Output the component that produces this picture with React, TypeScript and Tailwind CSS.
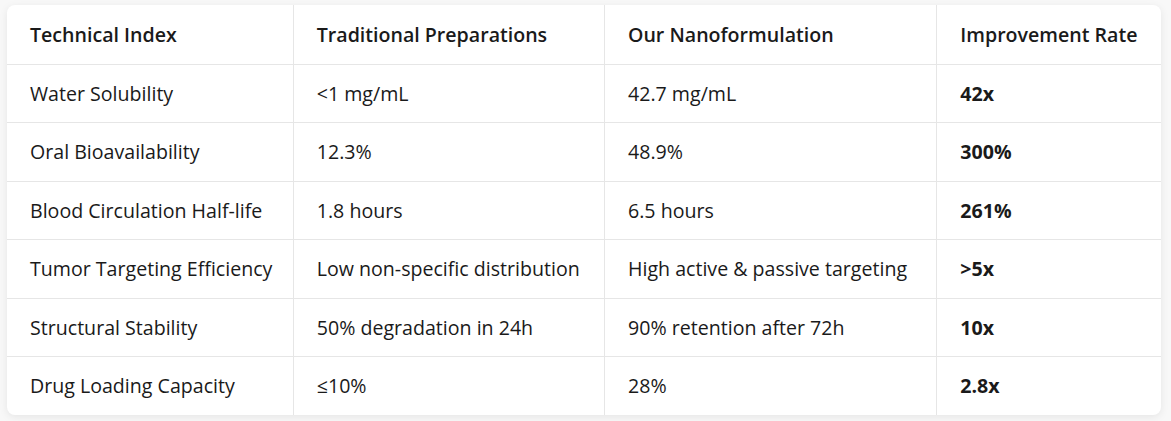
import React from "react";

const rows: [string, string, string, string][] = [
  ["Water Solubility", "<1 mg/mL", "42.7 mg/mL", "42x"],
  ["Oral Bioavailability", "12.3%", "48.9%", "300%"],
  ["Blood Circulation Half-life", "1.8 hours", "6.5 hours", "261%"],
  ["Tumor Targeting Efficiency", "Low non-specific distribution", "High active & passive targeting", ">5x"],
  ["Structural Stability", "50% degradation in 24h", "90% retention after 72h", "10x"],
  ["Drug Loading Capacity", "≤10%", "28%", "2.8x"],
];

const headers = ["Technical Index", "Traditional Preparations", "Our Nanoformulation", "Improvement Rate"];
const widths = ["w-[286px]", "w-[311px]", "w-[332px]", "w-[224px]"];

const App: React.FC = () => {
  return (
    <div className="w-[1171px] h-[421px] bg-[#f8f8f8] pt-[5px] pl-[7px] font-['Open_Sans','Noto_Sans',sans-serif] text-[#1a1a1a]">
      <div className="w-[1154px] bg-white rounded-lg shadow-[0_2px_8px_rgba(0,0,0,0.08)] overflow-hidden">
        <table className="w-full border-collapse table-fixed text-[19.6px]">
          <colgroup>
            {widths.map((w, i) => (
              <col key={i} className={w} />
            ))}
          </colgroup>
          <thead>
            <tr className="h-[59px]">
              {headers.map((h, i) => (
                <th
                  key={h}
                  className={`text-left font-semibold pl-[23px] pr-0 whitespace-nowrap border-b border-[#e6e6e6] ${i > 0 ? "border-l" : ""}`}
                >
                  {h}
                </th>
              ))}
            </tr>
          </thead>
          <tbody>
            {rows.map((r, ri) => (
              <tr key={ri} className="h-[58.5px]">
                {r.map((c, ci) => (
                  <td
                    key={ci}
                    className={`pl-[23px] pr-0 whitespace-nowrap border-[#e6e6e6] ${ri < rows.length - 1 ? "border-b" : ""} ${ci > 0 ? "border-l" : ""} ${ci === 3 ? "font-bold" : ""}`}
                  >
                    {c}
                  </td>
                ))}
              </tr>
            ))}
          </tbody>
        </table>
      </div>
    </div>
  );
};

export default App;
